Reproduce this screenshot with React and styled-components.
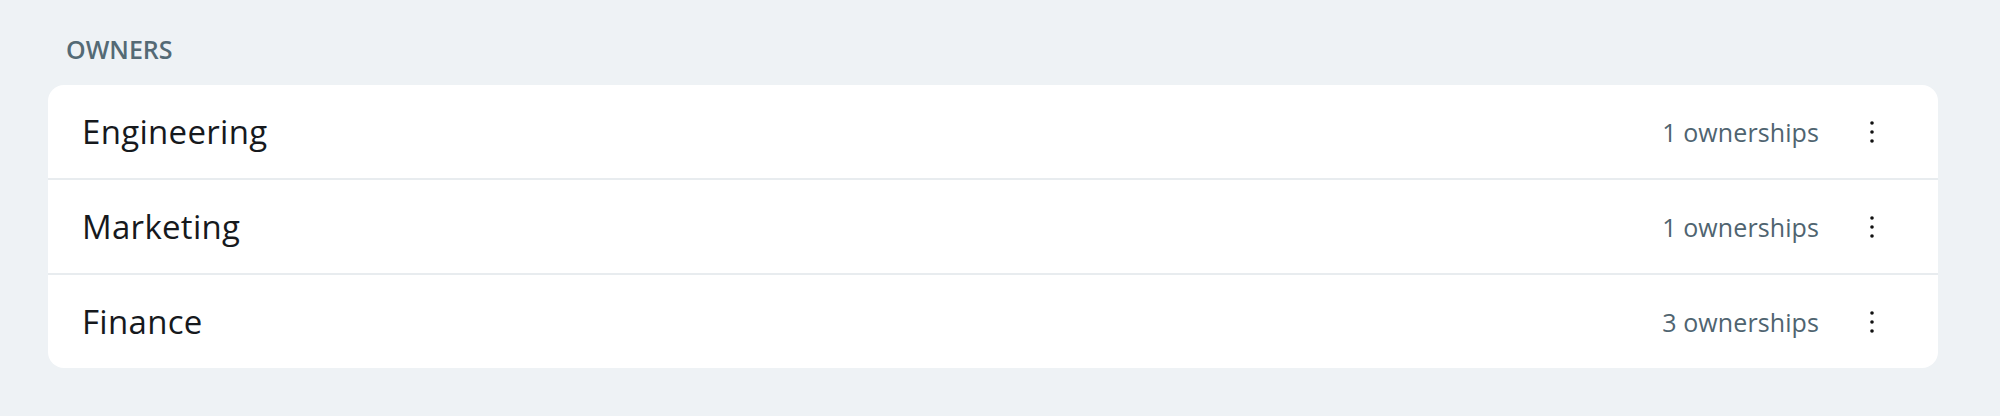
import React from 'react';
import styled, {createGlobalStyle} from 'styled-components';

const owners = [
    {name: 'Engineering', count: 1},
    {name: 'Marketing', count: 1},
    {name: 'Finance', count: 3},
];

const App = () => {
    return (
        <>
            <GlobalStyle/>
            <Page>
                <Title>OWNERS</Title>
                <Card>
                    {owners.map((owner) => (
                        <OwnerRow key={owner.name} name={owner.name} count={owner.count}/>
                    ))}
                </Card>
            </Page>
        </>
    )
}

//Row Component
const OwnerRow = ({name, count}) => {
    return (
        <Row>
            <Name>{name}</Name>
            <Meta>{count} ownerships</Meta>
            <MenuButton aria-label="More">
                <svg width="6" height="24" viewBox="0 0 6 24">
                    <circle cx="3" cy="3" r="1.8" fill="#111"/>
                    <circle cx="3" cy="12" r="1.8" fill="#111"/>
                    <circle cx="3" cy="21" r="1.8" fill="#111"/>
                </svg>
            </MenuButton>
        </Row>
    )
}

//Style
const GlobalStyle = createGlobalStyle`
  html, body {
    margin: 0;
    background: #eef2f5;
    font-family: "Open Sans", "Noto Sans", sans-serif;
  }
`;

const Page = styled.div`
  padding: 32px 62px 48px 48px;
`;

const Title = styled.div`
  font-size: 25px;
  line-height: 34px;
  font-weight: 600;
  color: #546a75;
  padding-left: 18px;
  margin-bottom: 19px;
`;

const Card = styled.div`
  background: #ffffff;
  border-radius: 16px;
  overflow: hidden;
`;

const Row = styled.div`
  display: flex;
  align-items: center;
  height: 93px;
  padding: 0 46px 0 34px;
  border-bottom: 2px solid #e8ecef;

  &:last-child {
    border-bottom: none;
  }
`;

const Name = styled.div`
  flex: 1;
  font-size: 33px;
  letter-spacing: 0.3px;
  color: #16191d;
`;

const Meta = styled.div`
  font-size: 25px;
  letter-spacing: 0.1px;
  color: #4f6470;
`;

const MenuButton = styled.button`
  display: flex;
  align-items: center;
  justify-content: center;
  width: 40px;
  height: 40px;
  margin-left: 33px;
  padding: 0;
  border: none;
  background: none;
  cursor: pointer;
`;

export default App;
